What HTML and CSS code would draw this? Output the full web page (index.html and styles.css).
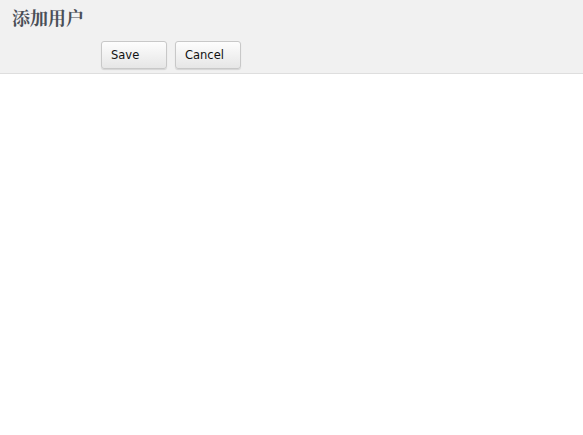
FILE: index.html
```html
<!DOCTYPE html>
<html>
<head>
<meta charset="utf-8">
<link rel="stylesheet" href="styles.css">
</head>
<body>
<div class="header">
  <h1 class="title">添加用户</h1>
  <div class="actions">
    <button class="btn">Save</button>
    <button class="btn">Cancel</button>
  </div>
</div>
</body>
</html>
```
FILE: styles.css
```css
html, body {
  margin: 0;
  padding: 0;
  background: #fff;
}
.header {
  background: #f1f1f1;
  border-bottom: 1px solid #dedede;
  height: 74px;
  box-sizing: border-box;
  padding: 6px 0 0 12px;
}
.title {
  margin: 0;
  font-family: "Noto Serif CJK SC", "Noto Sans CJK SC", serif;
  font-size: 18px;
  font-weight: bold;
  color: #4a4f57;
  line-height: 22px;
}
.actions {
  display: flex;
  gap: 8px;
  margin-top: 13px;
  padding-left: 89px;
}
.btn {
  width: 66px;
  height: 28px;
  border: 1px solid #c8c8c8;
  border-radius: 3px;
  background: linear-gradient(#fdfdfd, #e6e6e6);
  box-shadow: 0 1px 1px rgba(0,0,0,0.12);
  font-family: "DejaVu Sans", sans-serif;
  font-size: 11.5px;
  color: #111;
  text-align: left;
  padding: 0 0 0 9px;
}
```
